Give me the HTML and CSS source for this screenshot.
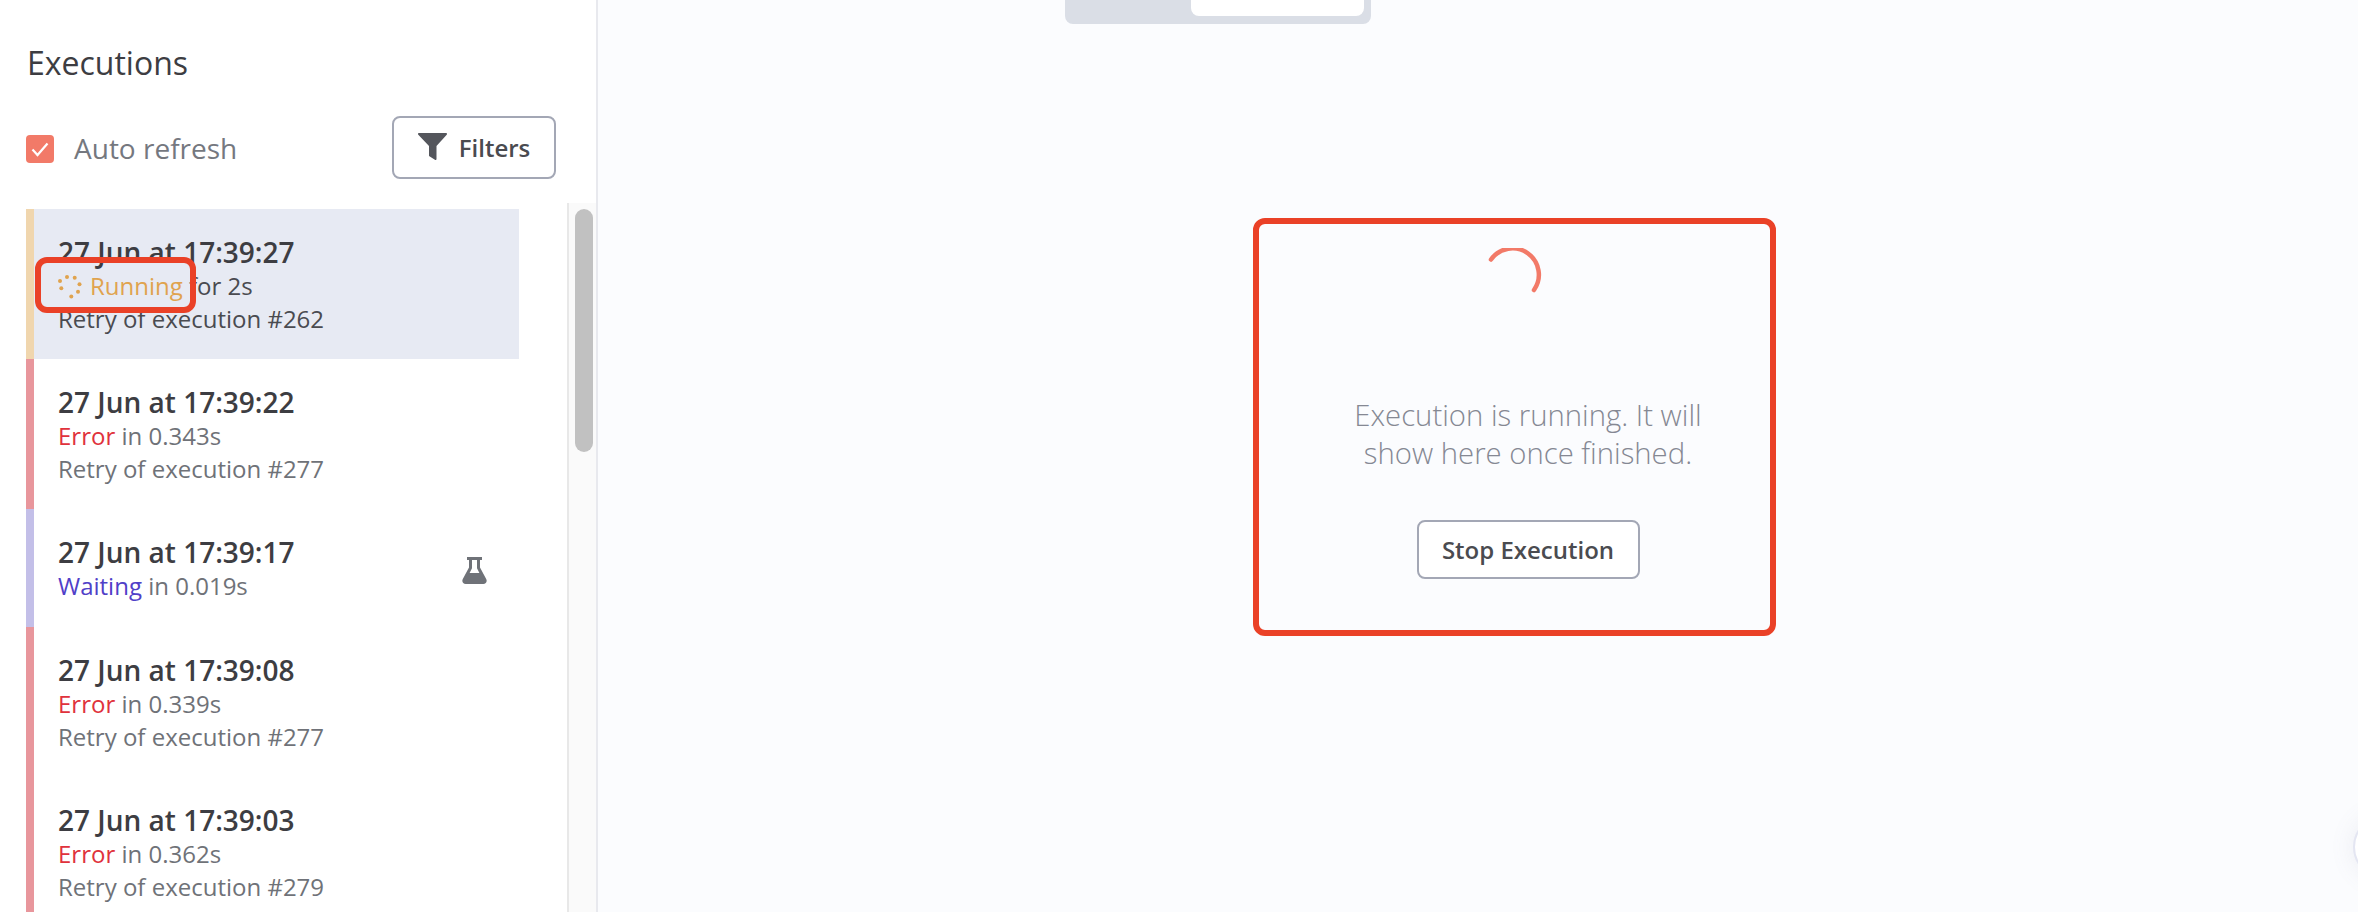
FILE: index.html
```html
<!DOCTYPE html>
<html lang="en">
<head>
  <meta charset="UTF-8">
  <title>Executions</title>
  <link rel="stylesheet" href="styles.css">
</head>
<body>
  <div class="app">
    <aside class="sidebar">
      <h1 class="title">Executions</h1>
      <div class="controls">
        <label class="auto-refresh">
          <span class="checkbox">
            <svg width="18" height="15" viewBox="0 0 18 15"><path d="M1.500 7.500l5 5.500L16.500 1.500" fill="none" stroke="#fff" stroke-width="2.200"/></svg>
          </span>
          Auto refresh
        </label>
        <button class="btn btn-filters">
          <svg width="29" height="28" viewBox="0 0 29 28"><path d="M1 0h27c.9 0 1.300 1 .7 1.700L18.500 13v13c0 .8-.9 1.300-1.600.8l-5.500-3.600c-.3-.2-.4-.5-.4-.8V13L.3 1.700C-.3 1 .1 0 1 0z" fill="#54565c"/></svg>
          Filters
        </button>
      </div>
      <div class="list-wrap">
        <ul class="list">
          <li class="item item-running selected">
            <div>
              <div class="date">27 Jun at 17:39:27</div>
              <div class="sub"><svg class="dots" width="24" height="24" viewBox="0 0 24 24" fill="#e0a34e"><circle cx="2" cy="6" r="2"/><circle cx="3.300" cy="13.300" r="2"/><circle cx="13.300" cy="21.500" r="2"/><circle cx="20" cy="16.700" r="2"/><circle cx="21.500" cy="9.300" r="2"/><circle cx="16.700" cy="2.700" r="2"/><circle cx="9" cy="2" r="2"/></svg><span class="st-running">Running</span> for 2s</div>
              <div class="sub">Retry of execution #262</div>
            </div>
            <span class="mark mark-running"></span>
          </li>
          <li class="item item-error">
            <div>
              <div class="date">27 Jun at 17:39:22</div>
              <div class="sub"><span class="st-error">Error</span> in 0.343s</div>
              <div class="sub">Retry of execution #277</div>
            </div>
          </li>
          <li class="item item-waiting">
            <div>
              <div class="date">27 Jun at 17:39:17</div>
              <div class="sub"><span class="st-waiting">Waiting</span> in 0.019s</div>
            </div>
            <svg class="flask" width="25" height="27" viewBox="0 0 25 27"><path fill-rule="evenodd" d="M5 0h15v3h-2v7.500l6.200 11.500c1.300 2.400-.2 5-2.900 5H3.700C1 27-.5 24.400.8 22L7 10.500V3H5zM10 3v8.300L7.600 16h9.800L15 11.300V3z" fill="#6f7278"/></svg>
          </li>
          <li class="item item-error">
            <div>
              <div class="date">27 Jun at 17:39:08</div>
              <div class="sub"><span class="st-error">Error</span> in 0.339s</div>
              <div class="sub">Retry of execution #277</div>
            </div>
          </li>
          <li class="item item-error">
            <div>
              <div class="date">27 Jun at 17:39:03</div>
              <div class="sub"><span class="st-error">Error</span> in 0.362s</div>
              <div class="sub">Retry of execution #279</div>
            </div>
          </li>
        </ul>
        <div class="scroll-track"><div class="scroll-thumb"></div></div>
      </div>
    </aside>
    <main class="main">
      <div class="tabs"><div class="tab-active"></div></div>
      <svg class="spinner" width="60" height="60" viewBox="0 0 60 60"><path d="M8 11.500A24 24 0 0 1 51 42" fill="none" stroke="#f27a68" stroke-width="4.500" stroke-linecap="round"/></svg>
      <p class="message">Execution is running. It will<br>show here once finished.</p>
      <button class="btn btn-stop">Stop Execution</button>
      <span class="mark mark-panel"></span>
      <span class="help-button"></span>
    </main>
  </div>
</body>
</html>
```

FILE: styles.css
```css
* {
  box-sizing: border-box;
}
html, body {
  height: 100%;
  margin: 0;
}
body {
  font-family: "Open Sans", sans-serif;
  color: #3d3d42;
  background-color: #fbfcfe;
  overflow: hidden;
}
.app {
  display: flex;
  height: 912px;
}
.sidebar {
  width: 598px;
  flex-shrink: 0;
  display: flex;
  flex-direction: column;
  background: white;
  border-right: 2px solid #e8e9ee;
}
.title {
  margin: 41px 0 0 27px;
  font-size: 32px;
  line-height: 44px;
  font-weight: 400;
}
.controls {
  display: flex;
  justify-content: space-between;
  align-items: center;
  height: 63px;
  margin: 31px 0 0 26px;
  padding-right: 40px;
}
.auto-refresh {
  display: flex;
  align-items: center;
  gap: 20px;
  font-size: 28px;
  color: #75787f;
}
.checkbox {
  width: 28px;
  height: 28px;
  margin-top: 3px;
  display: flex;
  align-items: center;
  justify-content: center;
  background-color: #f27a68;
  border-radius: 4px;
}
.btn {
  font-family: inherit;
  font-weight: 600;
  color: #4a4b50;
  background: white;
  border: 2px solid #a3a7b5;
  border-radius: 8px;
}
.btn-filters {
  width: 164px;
  height: 63px;
  padding-bottom: 2px;
  display: flex;
  align-items: center;
  justify-content: center;
  gap: 12px;
  font-size: 24px;
}
.list-wrap {
  display: flex;
  flex: 1;
  margin-top: 24px;
  min-height: 0;
}
.list {
  list-style: none;
  width: 493px;
  margin: 6px 0 0 26px;
  padding: 0;
}
.item {
  display: flex;
  justify-content: space-between;
  align-items: flex-start;
  position: relative;
  padding: 25px 32px 25px 24px;
  border-left: 8px solid transparent;
}
.item-running {
  border-left-color: #f0d6ae;
}
.item-error {
  border-left-color: #e8969c;
}
.item-waiting {
  border-left-color: #c3bfe8;
}
.selected {
  background-color: #e7eaf3;
}
.date {
  font-size: 28px;
  line-height: 36px;
  font-weight: 600;
  color: #3d3d42;
}
.sub {
  font-size: 24px;
  line-height: 32px;
  color: #6f7278;
}
.sub + .sub {
  margin-top: 1px;
  margin-bottom: -1px;
}
.item-running .sub {
  color: #4a4b50;
}
.dots {
  margin-right: 8px;
  vertical-align: -4px;
}
.st-running {
  color: #e0a34e;
}
.st-error {
  color: #e0323c;
}
.st-waiting {
  color: #5040c8;
}
.flask {
  margin-top: 23px;
}
.mark {
  position: absolute;
  border: 6px solid #ea4127;
}
.mark-running {
  left: 1px;
  top: 48px;
  width: 161px;
  height: 56px;
  border-radius: 12px;
}
.scroll-track {
  width: 29px;
  margin-left: 48px;
  padding: 6px 5px 0 6px;
  background-color: #fafafa;
  border-left: 2px solid #e8e8e8;
}
.scroll-thumb {
  width: 18px;
  height: 243px;
  background-color: #c1c1c1;
  border-radius: 9px;
}
.main {
  flex: 1;
  position: relative;
  display: flex;
  flex-direction: column;
  align-items: center;
  padding-left: 100px;
}
.tabs {
  align-self: flex-start;
  width: 306px;
  height: 24px;
  margin-left: 367px;
  padding-left: 126px;
  background-color: #dadee6;
  border-radius: 0 0 8px 8px;
}
.tab-active {
  width: 173px;
  height: 16px;
  background: white;
  border-radius: 0 0 8px 8px;
}
.spinner {
  margin: 224px 30px 0 0;
}
.message {
  margin: 88px 0 0;
  font-size: 29.300px;
  line-height: 38px;
  font-weight: 300;
  text-align: center;
  color: #858893;
}
.btn-stop {
  width: 223px;
  height: 59px;
  margin-top: 48px;
  font-size: 24px;
}
.mark-panel {
  left: 655px;
  top: 218px;
  width: 523px;
  height: 418px;
  border-radius: 12px;
}
.help-button {
  position: absolute;
  left: 1755px;
  top: 815px;
  width: 64px;
  height: 64px;
  background: white;
  border: 2px solid #e4e6f2;
  border-radius: 50%;
  box-shadow: 0 0 24px rgba(120, 125, 160, 0.12);
}
```
